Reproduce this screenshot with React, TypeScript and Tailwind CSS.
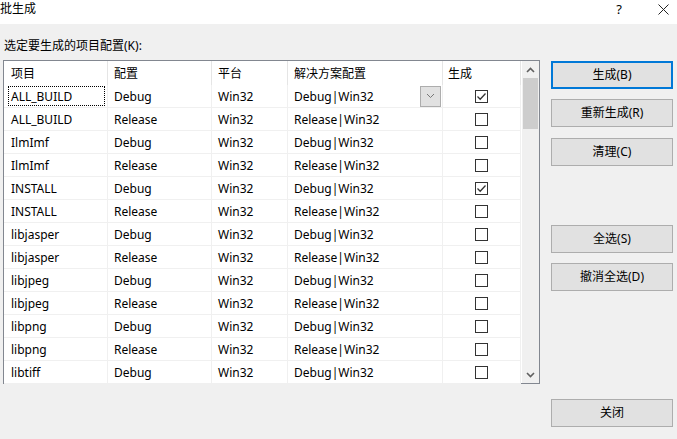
import React from 'react'

const rows: [string, string, boolean][] = [
  ['ALL_BUILD', 'Debug', true],
  ['ALL_BUILD', 'Release', false],
  ['IlmImf', 'Debug', false],
  ['IlmImf', 'Release', false],
  ['INSTALL', 'Debug', true],
  ['INSTALL', 'Release', false],
  ['libjasper', 'Debug', false],
  ['libjasper', 'Release', false],
  ['libjpeg', 'Debug', false],
  ['libjpeg', 'Release', false],
  ['libpng', 'Debug', false],
  ['libpng', 'Release', false],
  ['libtiff', 'Debug', false],
]

const font = { fontFamily: '"Segoe UI", "Noto Sans", "Noto Sans CJK SC", sans-serif' }

function Checkbox({ checked }: { checked: boolean }) {
  return (
    <div className="w-[13px] h-[13px] border border-[#333333] bg-white flex items-center justify-center">
      {checked && (
        <svg width="11" height="11" viewBox="0 0 11 11">
          <path d="M1.5 5.5 L4.2 8.2 L9.5 2.5" fill="none" stroke="#333" strokeWidth="1.3" />
        </svg>
      )}
    </div>
  )
}

function Button({ label, primary, className }: { label: string; primary?: boolean; className?: string }) {
  return (
    <div
      className={
        'h-[28px] w-[122px] flex items-center justify-center bg-[#e1e1e1] text-[12px] text-black ' +
        (primary ? 'border-2 border-[#0078d7] ' : 'border border-[#adadad] ') +
        (className ?? '')
      }
    >
      {label}
    </div>
  )
}

export default function App() {
  return (
    <div className="w-[677px] h-[439px] bg-[#f0f0f0] flex flex-col overflow-hidden text-[12px] text-black" style={font}>
      {/* Title bar */}
      <div className="h-[24px] bg-white flex items-start shrink-0">
        <div className="pt-[1px] text-[12px] leading-[16px]">批生成</div>
        <div className="ml-auto pt-[1px] w-[20px] text-center text-[13px] leading-[16px] mr-[29px]">?</div>
        <svg className="mt-[4px] mr-[8px]" width="11" height="11" viewBox="0 0 11 11">
          <path d="M0.5 0.5 L10.5 10.5 M10.5 0.5 L0.5 10.5" stroke="#222" strokeWidth="1" />
        </svg>
      </div>

      <div className="flex flex-1">
        {/* Left side */}
        <div className="ml-[3px] w-[537px] flex flex-col">
          <div className="mt-[14px] h-[16px] leading-[16px] pl-[1px]">选定要生成的项目配置(K):</div>
          <div className="mt-[6px] h-[324px] border border-[#828790] bg-white flex">
            <div className="flex flex-col w-[517px]">
              {/* Header */}
              <div className="flex h-[24px] shrink-0">
                <div className="w-[104px] border-r border-[#e5e5e5] pl-[7px] leading-[25px]">项目</div>
                <div className="w-[104px] border-r border-[#e5e5e5] pl-[6px] leading-[25px]">配置</div>
                <div className="w-[76px] border-r border-[#e5e5e5] pl-[6px] leading-[25px]">平台</div>
                <div className="w-[155px] border-r border-[#e5e5e5] pl-[6px] leading-[25px]">解决方案配置</div>
                <div className="w-[78px] border-r border-[#e5e5e5] pl-[5px] leading-[25px]">生成</div>
              </div>
              {rows.map(([name, cfg, checked], i) => (
                <div key={i} className="flex h-[23px] shrink-0 border-b border-[#f0f0f0]">
                  <div className="w-[104px] border-r border-[#f0f0f0] flex items-center">
                    {i === 0 ? (
                      <div className="ml-[4px] w-[97px] h-[20px] border border-dotted border-black pl-[2px] leading-[19px]">
                        {name}
                      </div>
                    ) : (
                      <div className="pl-[7px] pt-[1px]">{name}</div>
                    )}
                  </div>
                  <div className="w-[104px] border-r border-[#f0f0f0] pl-[6px] leading-[24px]">{cfg}</div>
                  <div className="w-[76px] border-r border-[#f0f0f0] pl-[6px] leading-[24px]">Win32</div>
                  <div className="w-[155px] border-r border-[#f0f0f0] pl-[6px] flex items-center">
                    <span className="pt-[1px]">{cfg}|Win32</span>
                    {i === 0 && (
                      <div className="ml-auto mr-[1px] w-[21px] h-[21px] bg-[#e1e1e1] border border-[#adadad] flex items-center justify-center">
                        <svg width="9" height="6" viewBox="0 0 9 6">
                          <path d="M1 1 L4.5 4.5 L8 1" fill="none" stroke="#777" strokeWidth="1" />
                        </svg>
                      </div>
                    )}
                  </div>
                  <div className="w-[78px] border-r border-[#f0f0f0] flex items-center justify-center pr-[1px]">
                    <Checkbox checked={checked} />
                  </div>
                </div>
              ))}
            </div>
            {/* Scrollbar */}
            <div className="ml-[1px] w-[17px] bg-[#f0f0f0] flex flex-col">
              <div className="h-[17px] flex items-center justify-center">
                <svg width="9" height="6" viewBox="0 0 9 6">
                  <path d="M1 5 L4.5 1.5 L8 5" fill="none" stroke="#606060" strokeWidth="1.6" />
                </svg>
              </div>
              <div className="mx-[1px] h-[51px] bg-[#cdcdcd]" />
              <div className="flex-1" />
              <div className="h-[17px] flex items-center justify-center">
                <svg width="9" height="6" viewBox="0 0 9 6">
                  <path d="M1 1 L4.5 4.5 L8 1" fill="none" stroke="#606060" strokeWidth="1.6" />
                </svg>
              </div>
            </div>
          </div>
        </div>

        {/* Right side buttons */}
        <div className="ml-[11px] flex flex-col">
          <Button label="生成(B)" primary className="mt-[37px]" />
          <Button label="重新生成(R)" className="mt-[10px]" />
          <Button label="清理(C)" className="mt-[11px]" />
          <Button label="全选(S)" className="mt-[59px]" />
          <Button label="撤消全选(D)" className="mt-[10px]" />
          <Button label="关闭" className="mt-[108px]" />
        </div>
      </div>
    </div>
  )
}
